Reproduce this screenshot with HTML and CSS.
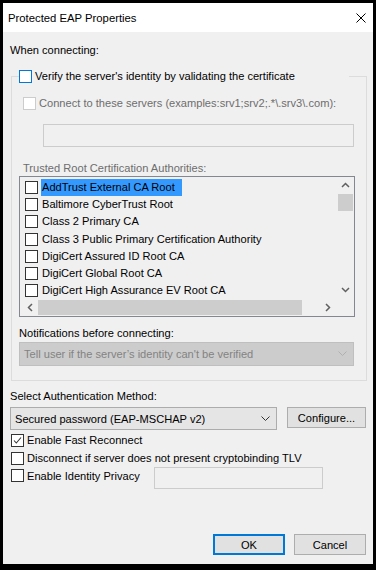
FILE: index.html
```html
<!DOCTYPE html>
<html lang="en">
<head>
  <meta charset="UTF-8">
  <title>Protected EAP Properties</title>
  <link rel="stylesheet" href="styles.css">
</head>
<body>
  <div class="window">
    <div class="titlebar">
      <span class="title">Protected EAP Properties</span>
      <svg class="close" width="10" height="10" viewBox="0 0 10 10">
        <path d="M0.5 0.5 L9.5 9.5 M9.5 0.5 L0.5 9.5" stroke="#000" stroke-width="1" fill="none"/>
      </svg>
    </div>

    <div class="content">
      <div class="label">When connecting:</div>

      <fieldset class="group">
        <legend class="check-row">
          <span class="box box-focus"></span>
          <span>Verify the server's identity by validating the certificate</span>
        </legend>

        <div class="check-row connect disabled">
          <span class="box box-disabled"></span>
          <span>Connect to these servers (examples:srv1;srv2;.*\.srv3\.com):</span>
        </div>
        <div class="textfield servers"></div>

        <div class="label trusted disabled">Trusted Root Certification Authorities:</div>
        <div class="listbox">
          <div class="list-items">
            <div class="item"><span class="box"></span><span class="item-text selected">AddTrust External CA Root</span></div>
            <div class="item"><span class="box"></span><span class="item-text">Baltimore CyberTrust Root</span></div>
            <div class="item"><span class="box"></span><span class="item-text">Class 2 Primary CA</span></div>
            <div class="item"><span class="box"></span><span class="item-text">Class 3 Public Primary Certification Authority</span></div>
            <div class="item"><span class="box"></span><span class="item-text">DigiCert Assured ID Root CA</span></div>
            <div class="item"><span class="box"></span><span class="item-text">DigiCert Global Root CA</span></div>
            <div class="item"><span class="box"></span><span class="item-text">DigiCert High Assurance EV Root CA</span></div>
          </div>
          <div class="vscroll">
            <svg width="9" height="6" viewBox="0 0 9 6"><path d="M1 5 L4.5 1.5 L8 5" stroke="#606060" stroke-width="1.5" fill="none"/></svg>
            <div class="vthumb"></div>
            <div class="spacer"></div>
            <svg width="9" height="6" viewBox="0 0 9 6"><path d="M1 1 L4.5 4.5 L8 1" stroke="#606060" stroke-width="1.5" fill="none"/></svg>
          </div>
          <div class="hscroll">
            <svg width="6" height="9" viewBox="0 0 6 9"><path d="M5 1 L1.5 4.5 L5 8" stroke="#606060" stroke-width="1.5" fill="none"/></svg>
            <div class="hthumb"></div>
            <svg width="6" height="9" viewBox="0 0 6 9"><path d="M1 1 L4.5 4.5 L1 8" stroke="#606060" stroke-width="1.5" fill="none"/></svg>
          </div>
          <div class="corner"></div>
        </div>

        <div class="label notify">Notifications before connecting:</div>
        <div class="combo combo-disabled">
          <span>Tell user if the server’s identity can't be verified</span>
          <svg width="9" height="6" viewBox="0 0 9 6"><path d="M0.5 0.5 L4.5 4.5 L8.5 0.5" stroke="#b0b0b0" stroke-width="1" fill="none"/></svg>
        </div>
      </fieldset>

      <div class="label method">Select Authentication Method:</div>
      <div class="method-row">
        <div class="combo combo-method">
          <span>Secured password (EAP-MSCHAP v2)</span>
          <svg width="9" height="6" viewBox="0 0 9 6"><path d="M0.5 0.5 L4.5 4.5 L8.5 0.5" stroke="#333" stroke-width="1" fill="none"/></svg>
        </div>
        <div class="button configure">Configure...</div>
      </div>

      <div class="options">
        <div class="check-row">
          <span class="box box-checked">
            <svg width="11" height="11" viewBox="0 0 11 11"><path d="M2 5.5 L4.3 8 L9 2.5" stroke="#333" stroke-width="1.1" fill="none"/></svg>
          </span>
          <span>Enable Fast Reconnect</span>
        </div>
        <div class="check-row">
          <span class="box"></span>
          <span>Disconnect if server does not present cryptobinding TLV</span>
        </div>
        <div class="check-row privacy">
          <span class="box"></span>
          <span class="privacy-text">Enable Identity Privacy</span>
          <div class="textfield identity"></div>
        </div>
      </div>

      <div class="footer">
        <div class="button ok">OK</div>
        <div class="button">Cancel</div>
      </div>
    </div>
  </div>
</body>
</html>
```

FILE: styles.css
```css
body {
  margin: 0;
  background: #000;
  padding: 3px 3px 6px 3px;
  font-family: "Liberation Sans", Arial, sans-serif;
  font-size: 11.1px;
  color: #000;
  white-space: nowrap;
}

.window {
  width: 370px;
  height: 561px;
  background: #f0f0f0;
  display: flex;
  flex-direction: column;
}

.titlebar {
  height: 29px;
  background: #fff;
  display: flex;
  align-items: center;
  justify-content: space-between;
  padding: 0 7px 0 5px;
}

.title {
  font-size: 11.3px;
}

.content {
  padding: 11px 6px 0 7px;
  display: flex;
  flex-direction: column;
  flex: 1;
}

.label {
  line-height: 15px;
}

.disabled {
  color: #6d6d6d;
}

.check-row {
  display: flex;
  align-items: center;
  gap: 3px;
  line-height: 15px;
}

.box {
  width: 11px;
  height: 11px;
  border: 1px solid #333;
  background: #fff;
  display: inline-flex;
  flex-shrink: 0;
}

.box-focus {
  border-color: #0078d7;
}

.box-disabled {
  border-color: #cccccc;
  background: #fff;
}

.box-checked {
  border-color: #333;
}

.group {
  margin: 11px 0 0 1px;
  padding: 0 12px 14px 7px;
  border: 1px solid #dcdcdc;
  width: 356px;
  min-width: 0;
  box-sizing: border-box;
}

.group legend {
  padding: 0;
  width: 330px;
}

.connect {
  margin: 12px 0 0 4px;
}

.textfield {
  border: 1px solid #cccccc;
  background: #f0f0f0;
  box-sizing: border-box;
}

.servers {
  margin: 13px 0 0 24px;
  width: 311px;
  height: 23px;
}

.trusted {
  margin: 14px 0 0 4px;
}

.listbox {
  margin-top: 0;
  width: 336px;
  height: 141px;
  border: 1px solid #828790;
  box-sizing: border-box;
  display: grid;
  grid-template-columns: 1fr 17px;
  grid-template-rows: 1fr 17px;
}

.list-items {
  padding: 2px 0 0 5px;
  overflow: hidden;
}

.item {
  display: flex;
  align-items: center;
  height: 17.2px;
  gap: 3px;
}

.item-text {
  padding: 0 1px;
  line-height: 17px;
}

.selected {
  background: #3399ff;
  color: #000;
  padding-right: 7px;
}

.vscroll {
  display: flex;
  flex-direction: column;
  align-items: center;
  padding-top: 5px;
  padding-bottom: 6px;
}

.vthumb {
  width: 15px;
  height: 17px;
  background: #cdcdcd;
  margin-top: 6px;
}

.spacer {
  flex: 1;
}

.hscroll {
  display: flex;
  align-items: center;
  padding: 0 6px 0 7px;
  gap: 5px;
}

.hthumb {
  flex: 1;
  height: 15px;
  background: #cdcdcd;
  margin-right: 18px;
}

.corner {
  background: #f0f0f0;
}

.notify {
  margin-top: 9px;
}

.combo {
  display: flex;
  align-items: center;
  justify-content: space-between;
  box-sizing: border-box;
  border: 1px solid #adadad;
  padding: 0 6px 0 4px;
}

.combo-disabled {
  margin-top: 1px;
  width: 335px;
  height: 24px;
  background: #cccccc;
  border-color: #bfbfbf;
  color: #838383;
}

.method {
  margin-top: 8px;
}

.method-row {
  display: flex;
  gap: 10px;
  margin-top: 3px;
}

.combo-method {
  width: 267px;
  height: 23px;
  background: #e5e5e5;
  border-color: #acacac;
}

.button {
  width: 72px;
  height: 21px;
  border: 1px solid #adadad;
  background: #e1e1e1;
  display: flex;
  align-items: center;
  justify-content: center;
  box-sizing: border-box;
}

.configure {
  width: 79px;
}

.options {
  margin-top: 3px;
  padding-left: 1px;
  display: flex;
  flex-direction: column;
  gap: 3px;
}

.privacy {
  align-items: flex-start;
}

.privacy-text {
  width: 124px;
}

.identity {
  width: 169px;
  height: 22px;
  margin-top: -2px;
}

.footer {
  margin-top: auto;
  margin-bottom: 9px;
  display: flex;
  justify-content: flex-end;
  gap: 9px;
  padding-right: 1px;
}

.ok {
  border: 2px solid #0078d7;
}
```
